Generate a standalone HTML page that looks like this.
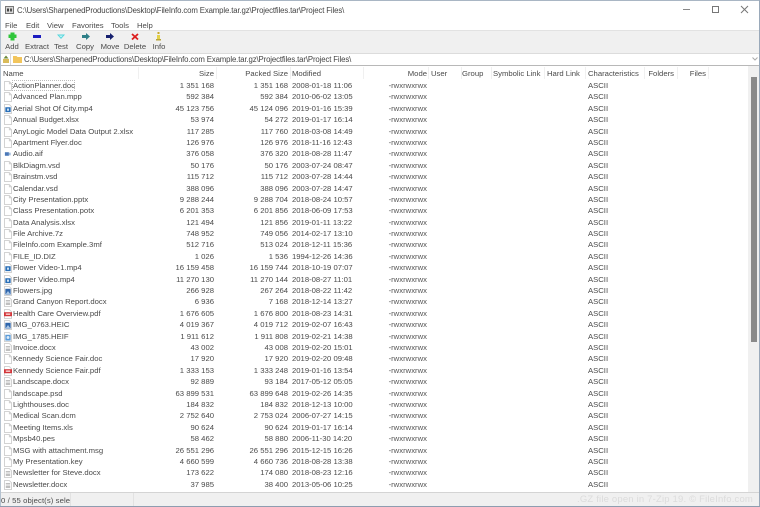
<!DOCTYPE html>
<html><head><meta charset="utf-8"><style>
html,body{margin:0;padding:0;width:760px;height:507px;overflow:hidden;background:#fff}
body{position:relative;font-family:"Liberation Sans",sans-serif;font-size:7.7px;color:#4a4a4a;filter:blur(.35px)}
.a{position:absolute;white-space:nowrap;line-height:11px}
.r{text-align:right}
#list{position:absolute;left:0;top:80px;width:748px}
.w{position:relative;height:11.4px}
.w b{font-weight:normal;position:absolute;top:0;line-height:11.4px;white-space:nowrap}
.w svg{position:absolute;left:4px;top:1px}
.n{left:13px}.s{right:534px}.p{right:460px}.d{left:292px}
.m{right:321px;color:#555}.c{left:588px}
.sep{position:absolute;top:67px;width:1px;height:12px;background:#f0f0f0}
.t{position:absolute;top:41px;width:40px;text-align:center;line-height:11px}
</style></head><body>
<svg width="0" height="0" style="position:absolute"><defs>
<symbol id="b" viewBox="0 0 9 11"><path d="M.5.5H6L8.5 3V10.5H.5Z" fill="#fff" stroke="#cdcdcd"/><path d="M6 .5V3H8.5" fill="none" stroke="#cdcdcd"/></symbol>
<symbol id="l" viewBox="0 0 9 11"><path d="M.5.5H6L8.5 3V10.5H.5Z" fill="#fff" stroke="#cdcdcd"/><path d="M2 4H7M2 5.5H7M2 7H7M2 8.5H7" stroke="#aaa" stroke-width=".8"/></symbol>
<symbol id="v" viewBox="0 0 9 11"><path d="M.5.5H6L8.5 3V10.5H.5Z" fill="#fff" stroke="#cdcdcd"/><rect x="1.5" y="3.5" width="6" height="5.5" fill="#2a6fb8"/><rect x="3.5" y="5" width="2" height="2.5" fill="#dfeefa"/></symbol>
<symbol id="i" viewBox="0 0 9 11"><path d="M.5.5H6L8.5 3V10.5H.5Z" fill="#fff" stroke="#cdcdcd"/><rect x="1.5" y="3" width="6" height="6.5" fill="#2f66ac"/><path d="M2 9L4.500 5.500L7 9Z" fill="#a9c6e6"/></symbol>
<symbol id="h" viewBox="0 0 9 11"><path d="M.5.5H6L8.5 3V10.5H.5Z" fill="#fff" stroke="#cdcdcd"/><rect x="1.500" y="3" width="6" height="6.500" fill="#5b9bd8"/><circle cx="4.500" cy="6" r="1.600" fill="#dcebf8"/></symbol>
<symbol id="f" viewBox="0 0 9 11"><path d="M.5.5H6L8.5 3V10.5H.5Z" fill="#fff" stroke="#cdcdcd"/><rect x="0" y="3.500" width="9" height="4.500" fill="#d2353a"/><rect x="2" y="4.800" width="5" height="1.800" fill="#f4c4c4"/></symbol>
<symbol id="u" viewBox="0 0 9 11"><rect x="1" y="3.500" width="4.500" height="4" fill="#4a78b8"/><rect x="5.500" y="4" width="2" height="3" fill="#9bb8dc"/></symbol>
</defs></svg>

<!-- window edges -->
<div class="a" style="left:0;top:0;width:760px;height:1px;background:#a9b6c4"></div>
<div class="a" style="left:0;top:0;width:1px;height:507px;background:#b4c2d0"></div>
<div class="a" style="left:759px;top:0;width:1px;height:507px;background:#9aa9ba"></div>
<div class="a" style="left:0;top:506px;width:760px;height:1px;background:#8e9db0"></div>

<!-- title -->
<svg class="a" style="left:5px;top:6px" width="9" height="8" viewBox="0 0 9 8"><rect x=".5" y=".5" width="8" height="7" fill="#d8d8d8" stroke="#777"/><rect x="2" y="2.500" width="2" height="3" fill="#444"/><rect x="5" y="2.500" width="2" height="3" fill="#555"/></svg>
<div class="a" id="title" style="left:17px;top:5px;font-size:7.8px;letter-spacing:-.13px;color:#444">C:\Users\SharpenedProductions\Desktop\FileInfo.com Example.tar.gz\Projectfiles.tar\Project Files\</div>
<svg class="a" style="left:680px;top:4px" width="72" height="12" viewBox="0 0 72 12"><path d="M3 5.500H10" stroke="#888"/><rect x="32.500" y="2.500" width="6" height="6" fill="none" stroke="#777"/><path d="M61 2L68 9M68 2L61 9" stroke="#777" fill="none"/></svg>

<!-- menu -->
<div class="a" style="left:5px;top:20px">File</div>
<div class="a" style="left:26px;top:20px">Edit</div>
<div class="a" style="left:47px;top:20px">View</div>
<div class="a" style="left:72px;top:20px">Favorites</div>
<div class="a" style="left:111px;top:20px">Tools</div>
<div class="a" style="left:137px;top:20px">Help</div>

<!-- toolbar -->
<div class="a" style="left:1px;top:30px;width:758px;height:22px;background:#f0f0f0;border-top:1px solid #e2e2e2;border-bottom:1px solid #dcdcdc"></div>
<svg class="a" style="left:7px;top:31px" width="160" height="11" viewBox="0 0 160 11">
<path d="M3.500 1.500H7.500V3.500H9.500V7H7.500V9.500H3.500V7H1.500V3.500H3.500Z" fill="#2fc63a"/>
<rect x="26" y="4" width="8" height="3" fill="#1c1cc0"/>
<path d="M50 3.500H58L54 8Z" fill="#52d6dc"/><path d="M52 4.500H56L54 6.500Z" fill="#c8f4f6"/>
<path d="M75 4H79V2L83 5.500L79 9V7H75Z" fill="#2f7f88"/>
<path d="M99 4H103V2L107 5.500L103 9V7H99Z" fill="#16206e"/>
<path d="M125 3L131 8.500M131 3L125 8.500" stroke="#dc1e1e" stroke-width="1.800"/>
<rect x="150.500" y="1" width="2" height="2" fill="#c9a92c"/><rect x="150" y="4" width="3" height="5" fill="#e3d24a"/><rect x="149" y="8" width="5" height="1.500" fill="#b9a53a"/>
</svg>
<div class="t" style="left:-8px">Add</div>
<div class="t" style="left:17px">Extract</div>
<div class="t" style="left:41px">Test</div>
<div class="t" style="left:65px">Copy</div>
<div class="t" style="left:90px">Move</div>
<div class="t" style="left:115px">Delete</div>
<div class="t" style="left:139px">Info</div>

<!-- address -->
<svg class="a" style="left:2px;top:55px" width="8" height="9" viewBox="0 0 8 9"><path d="M1 4H7V8H1Z" fill="#d9bb5a"/><path d="M4 .5L6.500 3.500H1.500Z" fill="#6d8a3a"/></svg>
<div class="a" style="left:10px;top:53px;width:1px;height:12px;background:#d8d8d8"></div>
<svg class="a" style="left:13px;top:55px" width="9" height="8" viewBox="0 0 9 8"><path d="M0 1H3.500L4.500 2H9V8H0Z" fill="#f2c55c"/></svg>
<div class="a" id="addr" style="left:24px;top:54px;font-size:7.8px;letter-spacing:-.13px;color:#444">C:\Users\SharpenedProductions\Desktop\FileInfo.com Example.tar.gz\Projectfiles.tar\Project Files\</div>
<svg class="a" style="left:752px;top:57px" width="6" height="4" viewBox="0 0 6 4"><path d="M.5 .5L3 3L5.500 .5" fill="none" stroke="#aaa"/></svg>
<div class="a" style="left:1px;top:65px;width:758px;height:1px;background:#b8b8b8"></div>

<!-- header -->
<div class="a" style="left:3px;top:68px">Name</div>
<div class="a r" style="right:546px;top:68px">Size</div>
<div class="a r" style="right:472px;top:68px">Packed Size</div>
<div class="a" style="left:292px;top:68px">Modified</div>
<div class="a r" style="right:333px;top:68px">Mode</div>
<div class="a" style="left:431px;top:68px">User</div>
<div class="a" style="left:462px;top:68px">Group</div>
<div class="a" style="left:493px;top:68px">Symbolic Link</div>
<div class="a" style="left:547px;top:68px">Hard Link</div>
<div class="a" style="left:588px;top:68px">Characteristics</div>
<div class="a r" style="right:86px;top:68px">Folders</div>
<div class="a r" style="right:54px;top:68px">Files</div>
<i class="sep" style="left:138px"></i><i class="sep" style="left:216px"></i><i class="sep" style="left:290px"></i><i class="sep" style="left:363px"></i><i class="sep" style="left:428px"></i><i class="sep" style="left:461px"></i><i class="sep" style="left:491px"></i><i class="sep" style="left:544px"></i><i class="sep" style="left:585px"></i><i class="sep" style="left:644px"></i><i class="sep" style="left:677px"></i><i class="sep" style="left:708px"></i>

<!-- list -->
<div class="a" style="left:12px;top:80px;width:63px;height:11px;border:1px dotted #bbb;box-sizing:border-box"></div>
<div id="list">
<div class="w"><svg width="8" height="10"><use href="#b"/></svg><b class="n">ActionPlanner.doc</b><b class="s">1 351 168</b><b class="p">1 351 168</b><b class="d">2008-01-18 11:06</b><b class="m">-rwxrwxrwx</b><b class="c">ASCII</b></div>
<div class="w"><svg width="8" height="10"><use href="#b"/></svg><b class="n">Advanced Plan.mpp</b><b class="s">592 384</b><b class="p">592 384</b><b class="d">2010-06-02 13:05</b><b class="m">-rwxrwxrwx</b><b class="c">ASCII</b></div>
<div class="w"><svg width="8" height="10"><use href="#v"/></svg><b class="n">Aerial Shot Of City.mp4</b><b class="s">45 123 756</b><b class="p">45 124 096</b><b class="d">2019-01-16 15:39</b><b class="m">-rwxrwxrwx</b><b class="c">ASCII</b></div>
<div class="w"><svg width="8" height="10"><use href="#b"/></svg><b class="n">Annual Budget.xlsx</b><b class="s">53 974</b><b class="p">54 272</b><b class="d">2019-01-17 16:14</b><b class="m">-rwxrwxrwx</b><b class="c">ASCII</b></div>
<div class="w"><svg width="8" height="10"><use href="#b"/></svg><b class="n">AnyLogic Model Data Output 2.xlsx</b><b class="s">117 285</b><b class="p">117 760</b><b class="d">2018-03-08 14:49</b><b class="m">-rwxrwxrwx</b><b class="c">ASCII</b></div>
<div class="w"><svg width="8" height="10"><use href="#b"/></svg><b class="n">Apartment Flyer.doc</b><b class="s">126 976</b><b class="p">126 976</b><b class="d">2018-11-16 12:43</b><b class="m">-rwxrwxrwx</b><b class="c">ASCII</b></div>
<div class="w"><svg width="8" height="10"><use href="#u"/></svg><b class="n">Audio.aif</b><b class="s">376 058</b><b class="p">376 320</b><b class="d">2018-08-28 11:47</b><b class="m">-rwxrwxrwx</b><b class="c">ASCII</b></div>
<div class="w"><svg width="8" height="10"><use href="#b"/></svg><b class="n">BlkDiagm.vsd</b><b class="s">50 176</b><b class="p">50 176</b><b class="d">2003-07-24 08:47</b><b class="m">-rwxrwxrwx</b><b class="c">ASCII</b></div>
<div class="w"><svg width="8" height="10"><use href="#b"/></svg><b class="n">Brainstm.vsd</b><b class="s">115 712</b><b class="p">115 712</b><b class="d">2003-07-28 14:44</b><b class="m">-rwxrwxrwx</b><b class="c">ASCII</b></div>
<div class="w"><svg width="8" height="10"><use href="#b"/></svg><b class="n">Calendar.vsd</b><b class="s">388 096</b><b class="p">388 096</b><b class="d">2003-07-28 14:47</b><b class="m">-rwxrwxrwx</b><b class="c">ASCII</b></div>
<div class="w"><svg width="8" height="10"><use href="#b"/></svg><b class="n">City Presentation.pptx</b><b class="s">9 288 244</b><b class="p">9 288 704</b><b class="d">2018-08-24 10:57</b><b class="m">-rwxrwxrwx</b><b class="c">ASCII</b></div>
<div class="w"><svg width="8" height="10"><use href="#b"/></svg><b class="n">Class Presentation.potx</b><b class="s">6 201 353</b><b class="p">6 201 856</b><b class="d">2018-06-09 17:53</b><b class="m">-rwxrwxrwx</b><b class="c">ASCII</b></div>
<div class="w"><svg width="8" height="10"><use href="#b"/></svg><b class="n">Data Analysis.xlsx</b><b class="s">121 494</b><b class="p">121 856</b><b class="d">2019-01-11 13:22</b><b class="m">-rwxrwxrwx</b><b class="c">ASCII</b></div>
<div class="w"><svg width="8" height="10"><use href="#b"/></svg><b class="n">File Archive.7z</b><b class="s">748 952</b><b class="p">749 056</b><b class="d">2014-02-17 13:10</b><b class="m">-rwxrwxrwx</b><b class="c">ASCII</b></div>
<div class="w"><svg width="8" height="10"><use href="#b"/></svg><b class="n">FileInfo.com Example.3mf</b><b class="s">512 716</b><b class="p">513 024</b><b class="d">2018-12-11 15:36</b><b class="m">-rwxrwxrwx</b><b class="c">ASCII</b></div>
<div class="w"><svg width="8" height="10"><use href="#b"/></svg><b class="n">FILE_ID.DIZ</b><b class="s">1 026</b><b class="p">1 536</b><b class="d">1994-12-26 14:36</b><b class="m">-rwxrwxrwx</b><b class="c">ASCII</b></div>
<div class="w"><svg width="8" height="10"><use href="#v"/></svg><b class="n">Flower Video-1.mp4</b><b class="s">16 159 458</b><b class="p">16 159 744</b><b class="d">2018-10-19 07:07</b><b class="m">-rwxrwxrwx</b><b class="c">ASCII</b></div>
<div class="w"><svg width="8" height="10"><use href="#v"/></svg><b class="n">Flower Video.mp4</b><b class="s">11 270 130</b><b class="p">11 270 144</b><b class="d">2018-08-27 11:01</b><b class="m">-rwxrwxrwx</b><b class="c">ASCII</b></div>
<div class="w"><svg width="8" height="10"><use href="#i"/></svg><b class="n">Flowers.jpg</b><b class="s">266 928</b><b class="p">267 264</b><b class="d">2018-08-22 11:42</b><b class="m">-rwxrwxrwx</b><b class="c">ASCII</b></div>
<div class="w"><svg width="8" height="10"><use href="#l"/></svg><b class="n">Grand Canyon Report.docx</b><b class="s">6 936</b><b class="p">7 168</b><b class="d">2018-12-14 13:27</b><b class="m">-rwxrwxrwx</b><b class="c">ASCII</b></div>
<div class="w"><svg width="8" height="10"><use href="#f"/></svg><b class="n">Health Care Overview.pdf</b><b class="s">1 676 605</b><b class="p">1 676 800</b><b class="d">2018-08-23 14:31</b><b class="m">-rwxrwxrwx</b><b class="c">ASCII</b></div>
<div class="w"><svg width="8" height="10"><use href="#i"/></svg><b class="n">IMG_0763.HEIC</b><b class="s">4 019 367</b><b class="p">4 019 712</b><b class="d">2019-02-07 16:43</b><b class="m">-rwxrwxrwx</b><b class="c">ASCII</b></div>
<div class="w"><svg width="8" height="10"><use href="#h"/></svg><b class="n">IMG_1785.HEIF</b><b class="s">1 911 612</b><b class="p">1 911 808</b><b class="d">2019-02-21 14:38</b><b class="m">-rwxrwxrwx</b><b class="c">ASCII</b></div>
<div class="w"><svg width="8" height="10"><use href="#l"/></svg><b class="n">Invoice.docx</b><b class="s">43 002</b><b class="p">43 008</b><b class="d">2019-02-20 15:01</b><b class="m">-rwxrwxrwx</b><b class="c">ASCII</b></div>
<div class="w"><svg width="8" height="10"><use href="#b"/></svg><b class="n">Kennedy Science Fair.doc</b><b class="s">17 920</b><b class="p">17 920</b><b class="d">2019-02-20 09:48</b><b class="m">-rwxrwxrwx</b><b class="c">ASCII</b></div>
<div class="w"><svg width="8" height="10"><use href="#f"/></svg><b class="n">Kennedy Science Fair.pdf</b><b class="s">1 333 153</b><b class="p">1 333 248</b><b class="d">2019-01-16 13:54</b><b class="m">-rwxrwxrwx</b><b class="c">ASCII</b></div>
<div class="w"><svg width="8" height="10"><use href="#l"/></svg><b class="n">Landscape.docx</b><b class="s">92 889</b><b class="p">93 184</b><b class="d">2017-05-12 05:05</b><b class="m">-rwxrwxrwx</b><b class="c">ASCII</b></div>
<div class="w"><svg width="8" height="10"><use href="#b"/></svg><b class="n">landscape.psd</b><b class="s">63 899 531</b><b class="p">63 899 648</b><b class="d">2019-02-26 14:35</b><b class="m">-rwxrwxrwx</b><b class="c">ASCII</b></div>
<div class="w"><svg width="8" height="10"><use href="#b"/></svg><b class="n">Lighthouses.doc</b><b class="s">184 832</b><b class="p">184 832</b><b class="d">2018-12-13 10:00</b><b class="m">-rwxrwxrwx</b><b class="c">ASCII</b></div>
<div class="w"><svg width="8" height="10"><use href="#b"/></svg><b class="n">Medical Scan.dcm</b><b class="s">2 752 640</b><b class="p">2 753 024</b><b class="d">2006-07-27 14:15</b><b class="m">-rwxrwxrwx</b><b class="c">ASCII</b></div>
<div class="w"><svg width="8" height="10"><use href="#b"/></svg><b class="n">Meeting Items.xls</b><b class="s">90 624</b><b class="p">90 624</b><b class="d">2019-01-17 16:14</b><b class="m">-rwxrwxrwx</b><b class="c">ASCII</b></div>
<div class="w"><svg width="8" height="10"><use href="#b"/></svg><b class="n">Mpsb40.pes</b><b class="s">58 462</b><b class="p">58 880</b><b class="d">2006-11-30 14:20</b><b class="m">-rwxrwxrwx</b><b class="c">ASCII</b></div>
<div class="w"><svg width="8" height="10"><use href="#b"/></svg><b class="n">MSG with attachment.msg</b><b class="s">26 551 296</b><b class="p">26 551 296</b><b class="d">2015-12-15 16:26</b><b class="m">-rwxrwxrwx</b><b class="c">ASCII</b></div>
<div class="w"><svg width="8" height="10"><use href="#b"/></svg><b class="n">My Presentation.key</b><b class="s">4 660 599</b><b class="p">4 660 736</b><b class="d">2018-08-28 13:38</b><b class="m">-rwxrwxrwx</b><b class="c">ASCII</b></div>
<div class="w"><svg width="8" height="10"><use href="#l"/></svg><b class="n">Newsletter for Steve.docx</b><b class="s">173 622</b><b class="p">174 080</b><b class="d">2018-08-23 12:16</b><b class="m">-rwxrwxrwx</b><b class="c">ASCII</b></div>
<div class="w"><svg width="8" height="10"><use href="#l"/></svg><b class="n">Newsletter.docx</b><b class="s">37 985</b><b class="p">38 400</b><b class="d">2013-05-06 10:25</b><b class="m">-rwxrwxrwx</b><b class="c">ASCII</b></div>
</div>

<!-- scrollbar -->
<div class="a" style="left:748px;top:66px;width:11px;height:426px;background:#f0f0f0"></div>
<div class="a" style="left:751px;top:77px;width:6px;height:265px;background:#8a8a8a"></div>

<!-- status -->
<div class="a" style="left:1px;top:492px;width:758px;height:14px;background:#f0f0f0;border-top:1px solid #d4d4d4;box-sizing:border-box"></div>
<div class="a" style="left:70px;top:493px;width:1px;height:13px;background:#e2e2e2"></div>
<div class="a" style="left:133px;top:493px;width:1px;height:13px;background:#e2e2e2"></div>
<div class="a" style="left:1px;top:495px;width:69px;overflow:hidden;letter-spacing:.1px">0 / 55 object(s) selected</div>
<div class="a r" style="right:7px;top:494px;font-size:9.5px;color:#dcdcdc;letter-spacing:.18px">.GZ file open in 7-Zip 19. © FileInfo.com</div>
</body></html>
